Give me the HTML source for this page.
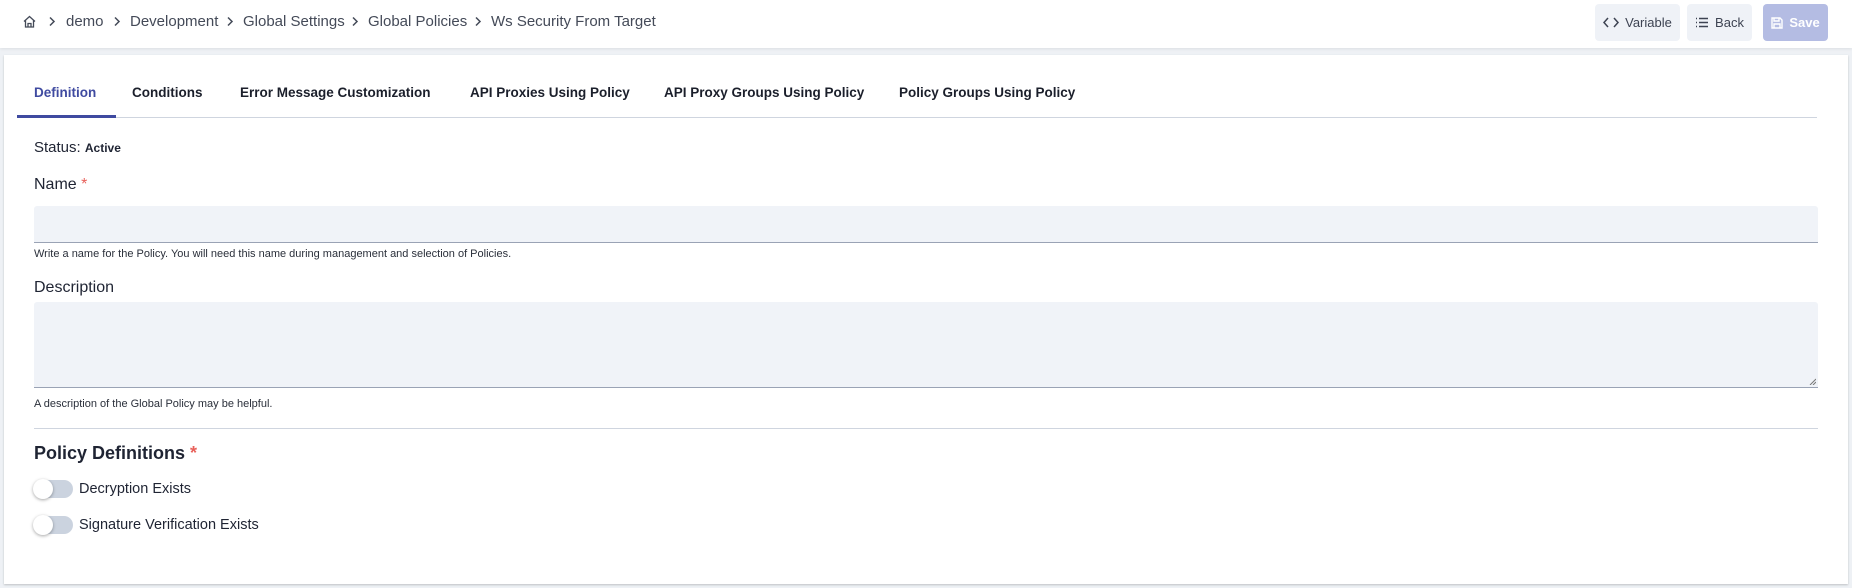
<!DOCTYPE html>
<html><head><meta charset="utf-8"><style>
*{box-sizing:border-box;margin:0;padding:0}
body{width:1852px;height:588px;background:#eef1f5;font-family:"Liberation Sans",sans-serif;color:#1f2433;position:relative;overflow:hidden}
.hdr{position:absolute;left:0;top:0;width:1852px;height:48px;background:#fff;box-shadow:0 1px 3px rgba(0,0,0,.08)}
.bc{position:absolute;top:13px;font-size:15px;color:#444a58;white-space:nowrap}
.chev{position:absolute;top:16px}
.btn{position:absolute;top:4px;height:37px;border-radius:4px;background:#eff2f7;font-size:13px;color:#3d4352;display:flex;align-items:center;justify-content:center;gap:6px}
.card{position:absolute;left:4px;top:55px;width:1844px;height:529px;background:#fff;box-shadow:0 1px 2px rgba(0,0,0,.2)}
.tab{position:absolute;top:85px;font-size:13.5px;font-weight:bold;color:#1b1f2b;white-space:nowrap}
.lbl{position:absolute;left:34px;font-size:16px;color:#1f2433}
.help{position:absolute;left:34px;font-size:11px;color:#2a2f3a}
.inp{position:absolute;left:34px;width:1784px;background:#f0f3f8;border-bottom:1px solid #9aa3b5;border-radius:3px 3px 0 0}
.tg{position:absolute;left:34px;width:39px;height:18px;border-radius:9px;background:#cbd3df}
.tg::after{content:"";position:absolute;left:-1px;top:-1px;width:20px;height:20px;border-radius:50%;background:#fff;box-shadow:0 1px 3px rgba(0,0,0,.35)}
.tl{position:absolute;left:79px;font-size:14.5px;color:#1f2433}
.star{color:#e8605a}
</style></head><body>
<div class="hdr">
<svg style="position:absolute;left:23px;top:15px" width="13" height="13" viewBox="0 0 13 13" fill="none" stroke="#444a58" stroke-width="1.3"><path d="M1 6.5L6.5 1.5L12 6.5M2.5 5.5V12H10.5V5.5M5 12V8.5H8V12"/></svg>
<span class="bc" style="left:66px">demo</span>
<span class="bc" style="left:130px">Development</span>
<span class="bc" style="left:243px">Global Settings</span>
<span class="bc" style="left:368px">Global Policies</span>
<span class="bc" style="left:491px">Ws Security From Target</span>
<svg class="chev" style="left:48px" width="8" height="11" viewBox="0 0 8 11" fill="none" stroke="#444a58" stroke-width="1.5"><path d="M2 1.5L6 5.5L2 9.5"/></svg>
<svg class="chev" style="left:113px" width="8" height="11" viewBox="0 0 8 11" fill="none" stroke="#444a58" stroke-width="1.5"><path d="M2 1.5L6 5.5L2 9.5"/></svg>
<svg class="chev" style="left:226px" width="8" height="11" viewBox="0 0 8 11" fill="none" stroke="#444a58" stroke-width="1.5"><path d="M2 1.5L6 5.5L2 9.5"/></svg>
<svg class="chev" style="left:351px" width="8" height="11" viewBox="0 0 8 11" fill="none" stroke="#444a58" stroke-width="1.5"><path d="M2 1.5L6 5.5L2 9.5"/></svg>
<svg class="chev" style="left:474px" width="8" height="11" viewBox="0 0 8 11" fill="none" stroke="#444a58" stroke-width="1.5"><path d="M2 1.5L6 5.5L2 9.5"/></svg>
<div class="btn" style="left:1595px;width:85px"><svg width="16" height="11" viewBox="0 0 16 11" fill="none" stroke="#3d4352" stroke-width="1.5"><path d="M5 1L1 5.5L5 10M11 1L15 5.5L11 10"/></svg>Variable</div>
<div class="btn" style="left:1687px;width:65px"><svg width="14" height="11" viewBox="0 0 14 11" fill="none" stroke="#3d4352" stroke-width="1.4"><path d="M4 1.5H13M4 5.5H13M4 9.5H13M1 1.5H2M1 5.5H2M1 9.5H2"/></svg>Back</div>
<div class="btn" style="left:1763px;width:65px;background:#b4bce3;color:#fff;font-weight:bold"><svg width="12" height="12" viewBox="0 0 12 12" fill="none" stroke="#fff" stroke-width="1.4"><path d="M1 1H9L11 3V11H1Z M3 1V4H8V1 M3 11V7H9V11"/></svg>Save</div>
</div>
<div class="card"></div>
<span class="tab" style="left:34px;color:#3f4aa0">Definition</span>
<span class="tab" style="left:132px">Conditions</span>
<span class="tab" style="left:240px">Error Message Customization</span>
<span class="tab" style="left:470px">API Proxies Using Policy</span>
<span class="tab" style="left:664px">API Proxy Groups Using Policy</span>
<span class="tab" style="left:899px">Policy Groups Using Policy</span>
<div style="position:absolute;left:17px;top:117px;width:1800px;height:1px;background:#cfd5df"></div>
<div style="position:absolute;left:17px;top:115px;width:99px;height:3px;background:#3f4aa0"></div>
<span class="lbl" style="top:139px;font-size:15px">Status: <b style="font-size:12px">Active</b></span>
<span class="lbl" style="top:176px">Name <span class="star">*</span></span>
<div class="inp" style="top:206px;height:37px"></div>
<span class="help" style="top:248px">Write a name for the Policy. You will need this name during management and selection of Policies.</span>
<span class="lbl" style="top:279px">Description</span>
<div class="inp" style="top:302px;height:86px"><svg style="position:absolute;right:2px;bottom:2px" width="7" height="7" viewBox="0 0 7 7" stroke="#777" stroke-width="1"><path d="M1 7L7 1M4 7L7 4"/></svg></div>
<span class="help" style="top:398px">A description of the Global Policy may be helpful.</span>
<div style="position:absolute;left:34px;top:428px;width:1784px;height:1px;background:#cfd5df"></div>
<span class="lbl" style="top:443px;font-size:18px;font-weight:bold">Policy Definitions <span class="star">*</span></span>
<div class="tg" style="top:480px"></div><span class="tl" style="top:481px">Decryption Exists</span>
<div class="tg" style="top:516px"></div><span class="tl" style="top:517px">Signature Verification Exists</span>
</body></html>
